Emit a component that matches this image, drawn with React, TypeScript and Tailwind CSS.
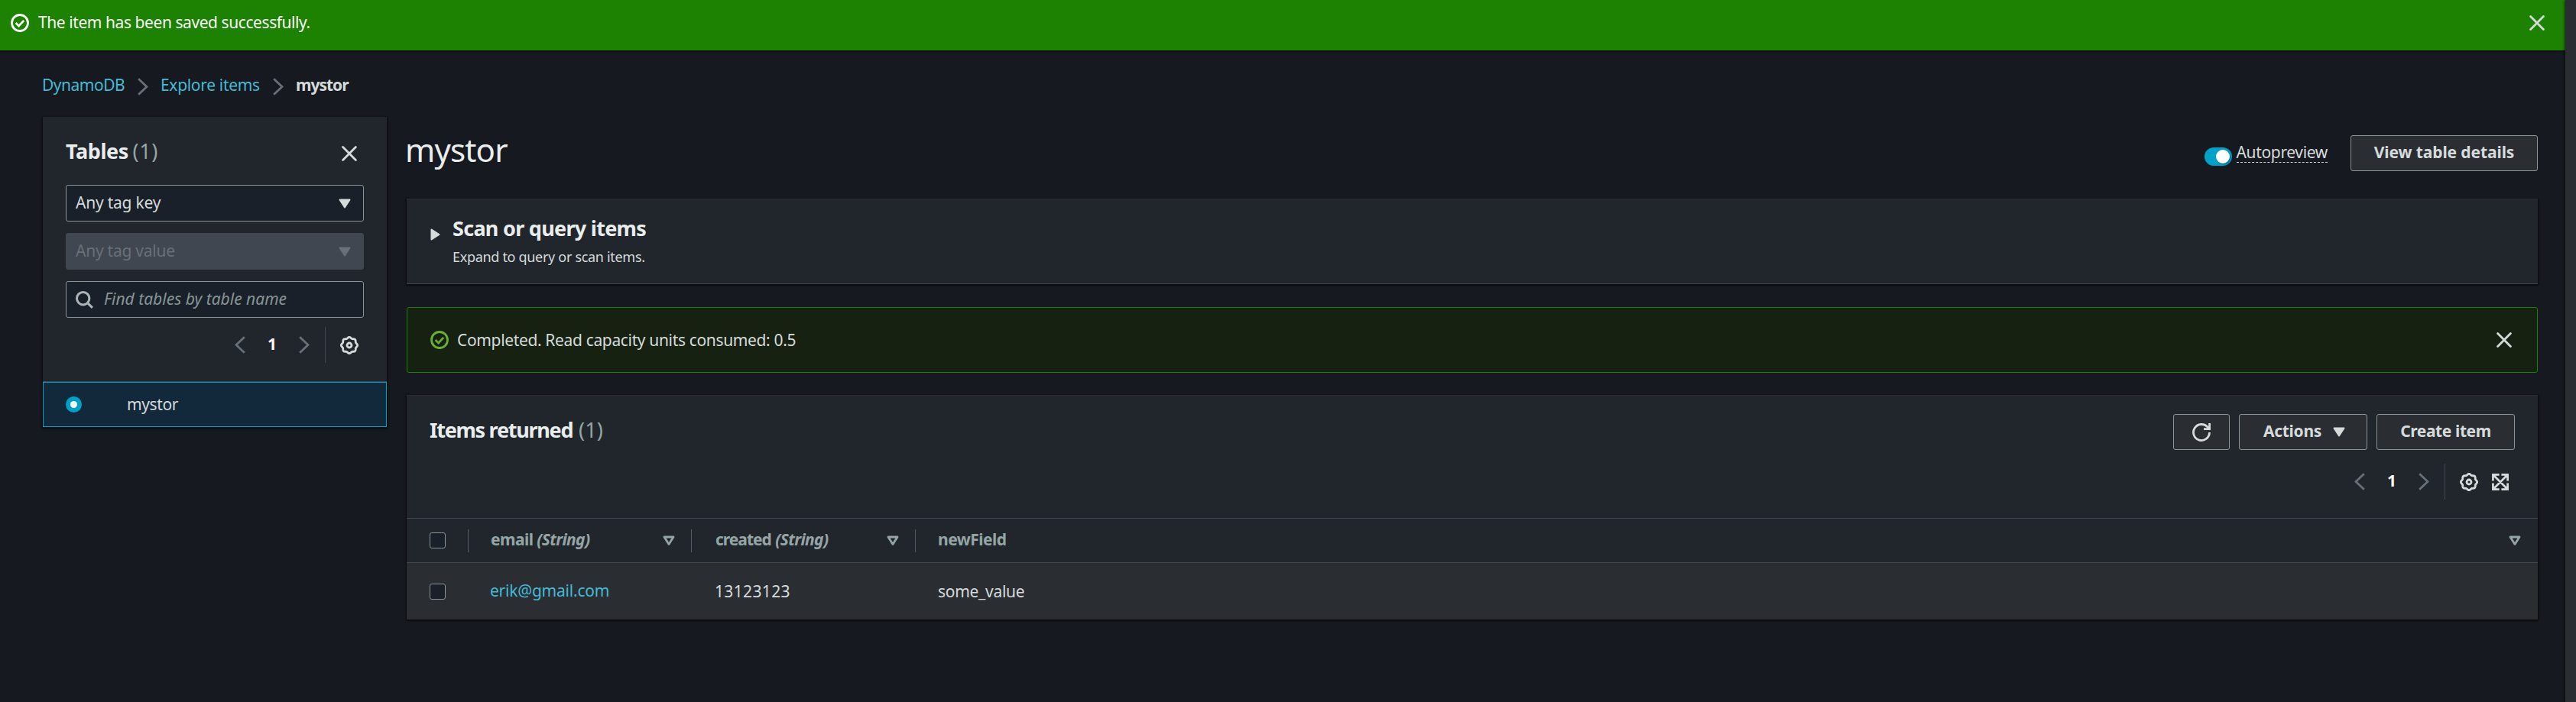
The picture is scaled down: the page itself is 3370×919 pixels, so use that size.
import React from "react";

const gearPath = (() => {
  const points: string[] = [];
  for (let i = 0; i < 120; i++) {
    const a = (i / 120) * Math.PI * 2;
    const r = 9.9 + 0.75 * Math.cos(a * 8);
    points.push(`${(12 + r * Math.cos(a)).toFixed(2)} ${(12 + r * Math.sin(a)).toFixed(2)}`);
  }
  return `M${points.join("L")}Z`;
})();

function Gear() {
  return (
    <svg className="size-6 shrink-0 text-[#d5dbdb]" viewBox="0 0 24 24" fill="none" stroke="currentColor" strokeWidth="2.8">
      <path d={gearPath} strokeLinejoin="round" />
      <circle cx="12" cy="12" r="3" />
    </svg>
  );
}

function Expand() {
  return (
    <svg className="h-[22px] w-[22px] shrink-0 text-[#d5dbdb]" viewBox="0 0 22 22" fill="none" stroke="currentColor" strokeWidth="2.7">
      <path d="M9.6 1.4H1.4V9.6M12.4 1.4h8.2V9.6M9.6 20.6H1.4V12.4M12.4 20.6h8.2V12.4M2 2l18 18M20 2L2 20" />
      <path d="M1 1h6L1 7zM21 1h-6l6 6zM1 21h6l-6-6zM21 21h-6l6-6z" fill="currentColor" stroke="none" />
    </svg>
  );
}

function Close() {
  return (
    <svg className="h-[20px] w-[20px] shrink-0 text-[#d5dbdb]" viewBox="0 0 20 20" fill="none" stroke="currentColor" strokeWidth="2.8" strokeLinecap="round">
      <path d="M1.6 1.6l16.8 16.8M18.4 1.6L1.6 18.4" />
    </svg>
  );
}

function Check({ className }: { className: string }) {
  return (
    <svg className={`size-6 shrink-0 ${className}`} viewBox="0 0 24 24" fill="none" stroke="currentColor" strokeWidth="2.8">
      <circle cx="12" cy="12" r="10.5" />
      <path d="M6.6 12l4 3.9 6.6-7" />
    </svg>
  );
}

function Chevron({ left }: { left?: boolean }) {
  return (
    <svg className="h-[23px] w-[14px] shrink-0 text-[#687078]" viewBox="0 0 14 23" fill="none" stroke="currentColor" strokeWidth="2.8">
      <path d={left ? "M12.8 1.2L2 11.5l10.8 10.3" : "M1.2 1.2L12 11.5 1.2 21.8"} />
    </svg>
  );
}

function Caret({ className }: { className: string }) {
  return (
    <svg className={`h-[13px] w-4 shrink-0 ${className}`} viewBox="0 0 16 13">
      <path d="M1.5 1.5h13L8 11.5z" fill="currentColor" stroke="currentColor" strokeWidth="2" strokeLinejoin="round" />
    </svg>
  );
}

function SortCaret() {
  return (
    <svg className="h-[14px] w-4 shrink-0 text-[#95a5a6]" viewBox="0 0 16 14">
      <path d="M2 2h12L8 11.4z" fill="none" stroke="currentColor" strokeWidth="2.8" strokeLinejoin="round" />
    </svg>
  );
}

function Pager() {
  return (
    <>
      <Chevron left />
      <span className="-mt-1 w-3 text-center font-bold leading-[30px] text-[#fafafa]">1</span>
      <Chevron />
    </>
  );
}

const card = "bg-[#21252c] shadow-[0_1px_2px_1px_rgba(0,0,0,0.6)]";
const button = "flex h-[47px] items-center rounded-[3px] border border-[#879596] bg-[#2a2e33] font-bold leading-[30px] text-[#d5dbdb]";

function Box() {
  return <span className="block h-[21px] w-[21px] rounded-[3px] border-[1.5px] border-[#879596] bg-[#1a2029]" />;
}

function Separator() {
  return <span className="block h-[30px] w-px bg-[#545b64]" />;
}

export default function App() {
  return (
    <div className="flex h-[919px] w-[3370px] overflow-hidden whitespace-nowrap bg-[#16191f] font-['Noto_Sans',sans-serif] text-[21px] leading-[30px] text-[#d5dbdb]">
      <div className="flex w-[3356px] shrink-0 flex-col">
        <header className="flex h-[66px] shrink-0 items-center bg-[#1d8102] pb-[6px] pl-[14px] pr-[27px] shadow-[0_1px_2px_rgba(0,0,0,0.7)]">
          <Check className="text-[#fafafa]" />
          <span className="-mt-[2px] ml-3 tracking-[-0.43px] text-[#fafafa]">The item has been saved successfully.</span>
          <span className="ml-auto"><Close /></span>
        </header>

        <nav className="mt-[30px] flex h-[30px] items-center pl-[55px]">
          <a className="w-[125px] tracking-[-0.5px] text-[#44b9d6]">DynamoDB</a>
          <span className="mt-1"><Chevron /></span>
          <a className="ml-4 w-[147px] tracking-[-0.32px] text-[#44b9d6]">Explore items</a>
          <span className="mt-1"><Chevron /></span>
          <span className="ml-4 font-bold tracking-[-1px]">mystor</span>
        </nav>

        <div className="mt-[27px] flex items-start gap-[26px] pl-[56px] pr-[36px]">
          <aside className={`w-[450px] shrink-0 ${card}`}>
            <div className="px-[30px] pt-[27px]">
              <div className="flex h-9 items-center justify-between pr-[9px]">
                <h2 className="text-[27px] font-bold leading-9 tracking-[-0.4px] text-[#eaeded]">
                  Tables <span className="-ml-px font-normal tracking-[0.5px] text-[#95a5a6]">(1)</span>
                </h2>
                <span className="mt-[5px]"><Close /></span>
              </div>
              <div className="mt-[26px] flex h-12 items-center justify-between rounded-[3px] border border-[#879596] bg-[#1a2029] pl-3 pr-4">
                <span className="-mt-[2px] tracking-[-0.22px]">Any tag key</span>
                <Caret className="text-[#d5dbdb]" />
              </div>
              <div className="mt-[15px] flex h-12 items-center justify-between rounded-[3px] border border-[#414750] bg-[#414750] pl-3 pr-4 text-[#687078]">
                <span className="-mt-[2px] tracking-[-0.25px]">Any tag value</span>
                <Caret className="text-[#687078]" />
              </div>
              <div className="mt-[15px] flex h-12 items-center rounded-[3px] border border-[#879596] bg-[#1a2029] pl-3">
                <svg className="h-[23px] w-[23px] text-[#aab7b8]" viewBox="0 0 23 23" fill="none" stroke="currentColor" strokeWidth="3">
                  <circle cx="9.7" cy="9.7" r="8.2" />
                  <path d="M15.4 15.4l6.5 6.5" />
                </svg>
                <span className="-mt-[2px] ml-[14px] italic text-[#879596]">Find tables by table name</span>
              </div>
              <div className="mt-3 flex h-[47px] items-center justify-end gap-[29px] pr-[7px]">
                <Pager />
                <div className="-ml-[9px] flex h-full items-center gap-[19px]">
                  <span className="h-full w-px bg-[#414750]" />
                  <Gear />
                </div>
              </div>
            </div>
            <div className="mt-6 flex h-[60px] flex-col border-t border-[#414750]">
              <div className="flex grow items-center border border-[#00a1c9] bg-[#12293b] pl-[29px]">
                <span className="flex h-[21px] w-[21px] items-center justify-center rounded-full bg-[#00a1c9]">
                  <span className="h-[9px] w-[9px] rounded-full bg-white" />
                </span>
                <span className="-mt-[2px] ml-[59px] tracking-[-0.4px]">mystor</span>
              </div>
            </div>
          </aside>

          <main className="flex grow flex-col">
            <div className="flex h-[107px] items-start">
              <h1 className="-ml-[2px] mt-4 text-[42px] leading-[54px] tracking-[-0.84px] text-[#eaeded]">mystor</h1>
              <div className="ml-auto mt-6 flex items-start">
                <span className="mt-4 flex h-6 w-9 items-center justify-end rounded-full bg-[#00a1c9] pr-[3px]">
                  <span className="h-[18px] w-[18px] rounded-full bg-white shadow-[1px_1px_2px_rgba(0,0,0,0.4)]" />
                </span>
                <span className="ml-[6px] mt-[7px] h-[29px] border-b border-dashed border-[#d5dbdb] tracking-[-0.35px]">Autopreview</span>
                <span className={`${button} ml-[30px] w-[245px] justify-center pb-[3px] tracking-[-0.1px]`}>View table details</span>
              </div>
            </div>

            <section className={`flex h-[112px] border-b border-t border-b-[#414750] border-t-[#2a2e33] pl-[31px] ${card}`}>
              <svg className="mt-[38px] h-4 w-[13px] text-[#d5dbdb]" viewBox="0 0 13 16">
                <path d="M1.5 1.5v13L11.5 8z" fill="currentColor" stroke="currentColor" strokeWidth="2" strokeLinejoin="round" />
              </svg>
              <div className="ml-4 mt-5">
                <h2 className="text-[27px] font-bold leading-9 tracking-[-0.71px] text-[#eaeded]">Scan or query items</h2>
                <p className="mt-[7px] text-[18px] leading-6 tracking-[-0.31px]">Expand to query or scan items.</p>
              </div>
            </section>

            <section className="mt-[30px] flex h-[86px] items-center rounded-[3px] border border-[#1d8102] bg-[#172111] pl-[30px] pr-[33px]">
              <Check className="text-[#6aaf35]" />
              <span className="-mt-px ml-[11px] tracking-[-0.35px]">Completed. Read capacity units consumed: 0.5</span>
              <span className="ml-auto"><Close /></span>
            </section>

            <section className={`mt-[29px] h-[294px] border-t border-[#2a2e33] ${card}`}>
              <div className="flex items-start pl-[30px] pr-[30px] pt-6">
                <h2 className="mt-[3px] text-[27px] font-bold leading-9 tracking-[-1.27px] text-[#eaeded]">
                  Items returned <span className="ml-[2px] font-normal tracking-[0.1px] text-[#95a5a6]">(1)</span>
                </h2>
                <div className="ml-auto flex gap-3">
                  <span className={`${button} w-[74px] justify-center`}>
                    <svg className="size-6" viewBox="0 0 24 24" fill="none" stroke="currentColor" strokeWidth="2.8">
                      <path d="M22.5 12A10.5 10.5 0 1 1 20 5.2L22 7.5" />
                      <path d="M22.6 0v7.6H15" />
                    </svg>
                  </span>
                  <span className={`${button} w-[168px] pl-[31px]`}>
                    <span className="-mt-[3px] w-[91px] tracking-[-0.3px]">Actions</span>
                    <Caret className="text-[#d5dbdb]" />
                  </span>
                  <span className={`${button} w-[181px] justify-center pb-[3px] tracking-[-0.4px]`}>Create item</span>
                </div>
              </div>
              <div className="mt-[18px] flex h-[47px] items-center justify-end gap-[29px] pr-[38px]">
                <Pager />
                <div className="-ml-[9px] flex h-full items-center">
                  <span className="h-full w-px bg-[#414750]" />
                  <span className="ml-[19px] mr-[18px]"><Gear /></span>
                  <Expand />
                </div>
              </div>

              <div className="mt-6 flex h-[59px] items-center border-b border-t border-[#414750] pl-[30px] pr-[22px] font-bold text-[#95a5a6]">
                <span className="w-[50px]"><Box /></span>
                <Separator />
                <span className="-mt-[3px] ml-[29px] w-[225px] tracking-[-0.55px]">
                  email <i className="tracking-[-0.65px]">(String)</i>
                </span>
                <SortCaret />
                <span className="ml-[21px]"><Separator /></span>
                <span className="-mt-[3px] ml-[31px] w-[224px] tracking-[-1px]">
                  created <i className="ml-px tracking-[-0.65px]">(String)</i>
                </span>
                <SortCaret />
                <span className="ml-[21px]"><Separator /></span>
                <span className="-mt-[3px] ml-[29px] tracking-[-0.5px]">newField</span>
                <span className="ml-auto"><SortCaret /></span>
              </div>
              <div className="flex h-[74px] items-center bg-[#2a2e33] pl-[30px]">
                <span className="w-[79px]"><Box /></span>
                <a className="-mt-[3px] w-[294px] tracking-[-0.22px] text-[#44b9d6]">erik@gmail.com</a>
                <span className="w-[292px] tracking-[0.35px]">13123123</span>
                <span className="tracking-[-0.3px]">some_value</span>
              </div>
            </section>
          </main>
        </div>
      </div>
      <div className="grow bg-[#2a2e33] shadow-[-1px_0_3px_rgba(0,0,0,0.6)]" />
    </div>
  );
}
